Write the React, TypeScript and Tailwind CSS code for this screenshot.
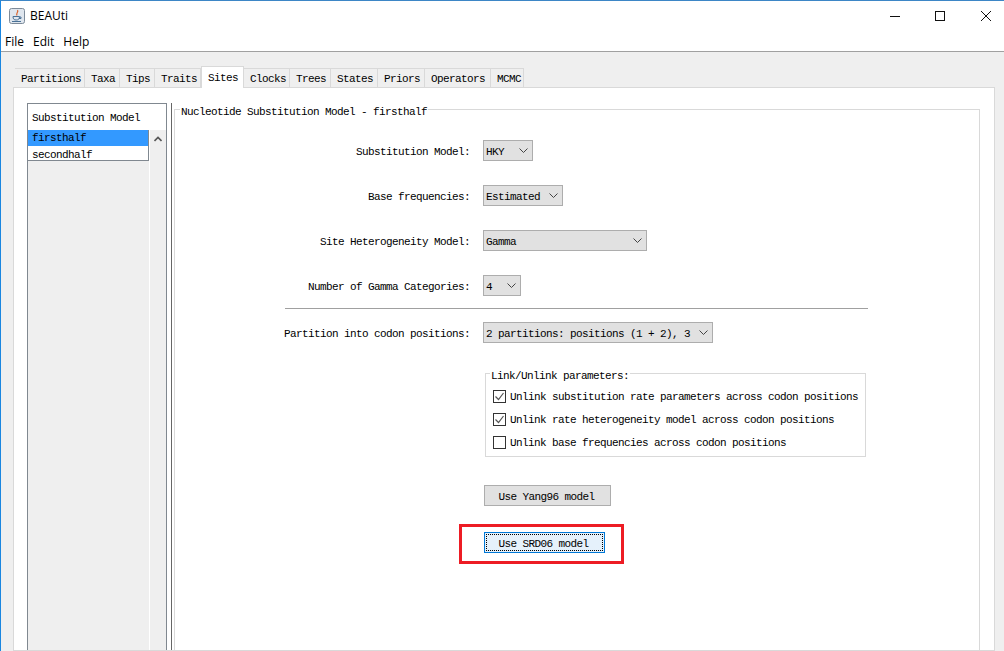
const tabs = [
  { label: "Partitions", width: "w-[70px]" },
  { label: "Taxa", width: "w-[35px]" },
  { label: "Tips", width: "w-[35px]" },
  { label: "Traits", width: "w-[46px]" },
  { label: "Sites", width: "w-[43px]", active: true },
  { label: "Clocks", width: "w-[46px]" },
  { label: "Trees", width: "w-[41px]" },
  { label: "States", width: "w-[47px]" },
  { label: "Priors", width: "w-[47px]" },
  { label: "Operators", width: "w-[66px]" },
  { label: "MCMC", width: "w-[33px]" },
];

const checks = [
  { label: "Unlink substitution rate parameters across codon positions", checked: true },
  { label: "Unlink rate heterogeneity model across codon positions", checked: true },
  { label: "Unlink base frequencies across codon positions", checked: false },
];

function Chevron() {
  return (
    <svg width="9" height="5" viewBox="0 0 9 5" className="shrink-0">
      <path d="M0.5 0.5 L4.5 4.5 L8.5 0.5" fill="none" stroke="#444" strokeWidth="1" />
    </svg>
  );
}

function Combo({ value, width }: { value: string; width: string }) {
  return (
    <div className={`${width} h-[21px] flex items-center justify-between pl-[2px] pr-[4px] bg-[#e1e1e1] border border-[#adadad] text-black whitespace-pre`}>
      <span className="pt-[3px]">{value}</span>
      <Chevron />
    </div>
  );
}

function Row({ label, margin, children }: { label: string; margin: string; children: React.ReactNode }) {
  return (
    <div className={`flex items-center ${margin}`}>
      <div className="w-[295px] pt-[3px] text-right text-black whitespace-pre">{label}</div>
      <div className="ml-[13px]">{children}</div>
    </div>
  );
}

function JavaIcon() {
  return (
    <svg width="16" height="16" viewBox="0 0 16 16">
      <rect x="0.5" y="0.5" width="15" height="15" rx="2" fill="#dfe6ee" stroke="#7c8a99" />
      <path d="M8.5 2 C10 4 6.5 5 8 7.5" fill="none" stroke="#d9622b" strokeWidth="1.2" />
      <path d="M4 8.5 H10.5 C10.5 11 9.5 12 7.2 12 C5 12 4 11 4 8.5 Z M10.5 9 H12 V10.5 H10" fill="none" stroke="#4a7196" strokeWidth="1" />
      <path d="M3 13.5 H12" stroke="#4a7196" strokeWidth="1" />
    </svg>
  );
}

export default function App() {
  return (
    <div className="w-[1004px] h-[651px] overflow-hidden flex flex-col bg-[#efefef] border-t border-l border-t-[#3d86c6] border-l-[#1a86e0] text-[11px] tracking-[-0.6px] font-['Liberation_Mono',monospace]">
      {/* title bar */}
      <div className="h-[30px] shrink-0 bg-white flex items-center pl-[8px] tracking-normal font-['Open_Sans',sans-serif] text-[12px] text-black">
        <JavaIcon />
        <span className="ml-[5px]">BEAUti</span>
        <div className="ml-auto flex items-center">
          <svg width="102" height="12" viewBox="0 0 102 12" className="mr-[12px] mt-[1px]">
            <path d="M0 5.5 H10" stroke="#111" strokeWidth="1" />
            <rect x="45.5" y="0.5" width="9" height="9" fill="none" stroke="#111" strokeWidth="1" />
            <path d="M91 0 L101 10 M101 0 L91 10" stroke="#111" strokeWidth="1" />
          </svg>
        </div>
      </div>

      {/* menu bar */}
      <div className="h-[21px] shrink-0 bg-white border-b border-[#a0a0a0] flex items-center pl-[4px] pt-[1px] gap-[9px] tracking-normal font-['Open_Sans',sans-serif] text-[12px] text-black">
        <span>File</span>
        <span>Edit</span>
        <span>Help</span>
      </div>

      <div className="flex-1 min-h-0 flex flex-col pl-[12px] pt-[13px]">
        {/* tabs */}
        <div className="h-[22px] shrink-0 flex items-end relative z-10 pl-[2px]">
          {tabs.map((tab) =>
            tab.active ? (
              <div key={tab.label} className={`${tab.width} h-[22px] -mb-px pl-[6px] pt-[3px] bg-white border-x border-t border-[#d9d9d9] text-black`}>
                {tab.label}
              </div>
            ) : (
              <div key={tab.label} className={`${tab.width} h-[19px] pl-[6px] pt-[3px] flex items-center border-r border-t border-[#d9d9d9] text-black`}>
                {tab.label}
              </div>
            )
          )}
        </div>

        {/* tab content */}
        <div className="w-[982px] flex-1 min-h-0 flex bg-white border border-[#d9d9d9] pl-[13px] pt-[15px] pr-[14px]">
          {/* partition list */}
          <div className="w-[140px] shrink-0 flex flex-col border-x border-t border-[#808890] bg-[#efefef]">
            <div className="h-[26px] shrink-0 bg-white flex items-center pl-[4px] pt-[3px] text-black">
              Substitution Model
            </div>
            <div className="flex-1 flex">
              <div className="w-[121px] h-[31px] shrink-0 flex flex-col bg-white border-r border-b border-[#808890] text-black">
                <div className="h-[16px] flex items-center pl-[4px] pt-[1px] bg-[#3399ff]">firsthalf</div>
                <div className="h-[15px] flex items-center pl-[4px] pt-[3px]">secondhalf</div>
              </div>
              <div className="flex-1 border-l border-white flex justify-center pt-[6px]">
                <svg width="8" height="6" viewBox="0 0 8 6">
                  <path d="M0.5 5 L4 1.5 L7.5 5" fill="none" stroke="#555" strokeWidth="1.6" />
                </svg>
              </div>
            </div>
          </div>

          {/* splitter */}
          <div className="ml-[4px] w-[1px] shrink-0 bg-[#666666]" />
          <div className="w-[2px] shrink-0" />

          {/* model options */}
          <div className="flex-1 min-w-0 pt-[6px] flex">
            <div className="flex-1 relative border-l border-t border-r border-[#d9d9d9] pt-[30px]">
              <div className="absolute -top-[6px] left-[5px] px-px bg-white text-black whitespace-pre">
                Nucleotide Substitution Model - firsthalf
              </div>

              <Row label="Substitution Model:" margin="">
                <Combo value="HKY" width="w-[50px]" />
              </Row>
              <Row label="Base frequencies:" margin="mt-[24px]">
                <Combo value="Estimated" width="w-[80px]" />
              </Row>
              <Row label="Site Heterogeneity Model:" margin="mt-[24px]">
                <Combo value="Gamma" width="w-[164px]" />
              </Row>
              <Row label="Number of Gamma Categories:" margin="mt-[24px]">
                <Combo value="4" width="w-[38px]" />
              </Row>

              <div className="ml-[110px] mt-[12px] w-[583px] h-px bg-[#a0a0a0]" />

              <Row label="Partition into codon positions:" margin="mt-[13px]">
                <Combo value="2 partitions: positions (1 + 2), 3" width="w-[230px]" />
              </Row>

              {/* link/unlink group */}
              <div className="relative ml-[310px] mt-[30px] w-[381px] h-[84px] border border-[#d9d9d9] pt-[11px] pl-[7px]">
                <div className="absolute -top-[6px] left-[4px] px-px bg-white text-black whitespace-pre">
                  Link/Unlink parameters:
                </div>
                {checks.map((c) => (
                  <div key={c.label} className="h-[23px] flex items-center text-black whitespace-pre">
                    <div className="w-[13px] h-[13px] shrink-0 border border-[#333333] bg-white flex items-center justify-center">
                      {c.checked && (
                        <svg width="11" height="11" viewBox="0 0 11 11">
                          <path d="M1.5 5.5 L4.5 8.5 L9.5 2" fill="none" stroke="#555" strokeWidth="1.2" />
                        </svg>
                      )}
                    </div>
                    <span className="ml-[4px] pt-[2px]">{c.label}</span>
                  </div>
                ))}
              </div>

              <div className="ml-[309px] mt-[28px] w-[127px] h-[21px] flex items-center justify-center pt-[3px] pr-[2px] bg-[#e1e1e1] border border-[#adadad] text-black">
                Use Yang96 model
              </div>

              {/* highlighted button with the red annotation round it */}
              <div className="relative ml-[309px] mt-[26px] w-[121px] h-[21px] flex items-center justify-center pt-[3px] pr-[2px] bg-[#e5f1fb] border border-[#0078d7] text-black">
                <div className="absolute inset-[1px] border border-dotted border-black" />
                Use SRD06 model
                <div className="absolute -left-[26px] -top-[9px] w-[165px] h-[40px] border-[3px] border-[#ed1c24]" />
              </div>
            </div>
          </div>
        </div>
      </div>
    </div>
  );
}
